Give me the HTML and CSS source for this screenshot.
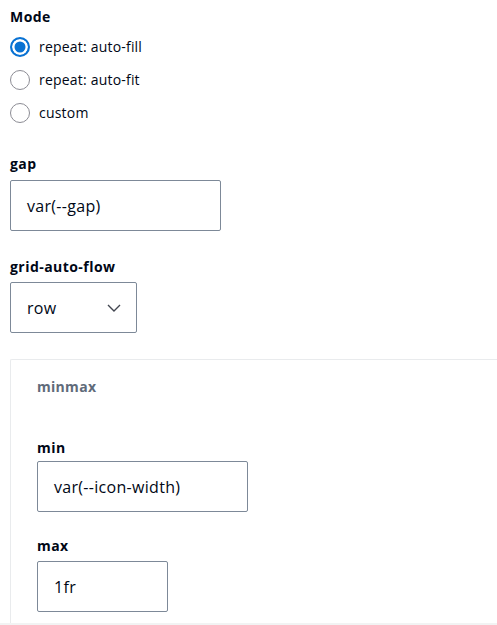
FILE: index.html
```html
<!DOCTYPE html>
<html>
<head>
<meta charset="utf-8">
<link rel="stylesheet" href="styles.css">
</head>
<body>
<div class="page">
  <div class="field mode">
    <div class="label">Mode</div>
    <div class="radios">
      <div class="radio checked"><span class="dot"></span><span>repeat: auto-fill</span></div>
      <div class="radio"><span class="dot"></span><span>repeat: auto-fit</span></div>
      <div class="radio"><span class="dot"></span><span>custom</span></div>
    </div>
  </div>
  <div class="field gapfield">
    <div class="label">gap</div>
    <div class="input w210">var(--gap)</div>
  </div>
  <div class="field flowfield">
    <div class="label">grid-auto-flow</div>
    <div class="input select">
      <span>row</span>
      <svg width="14" height="8" viewBox="0 0 14 8"><path d="M1 1 L7 7 L13 1" fill="none" stroke="#424650" stroke-width="1.4"/></svg>
    </div>
  </div>
  <div class="panel">
    <div class="panel-title">minmax</div>
    <div class="field minfield">
      <div class="label">min</div>
      <div class="input w210 tight">var(--icon-width)</div>
    </div>
    <div class="field maxfield">
      <div class="label">max</div>
      <div class="input w130">1fr</div>
    </div>
  </div>
</div>
</body>
</html>
```
FILE: styles.css
```css
html, body {
  margin: 0;
  padding: 0;
  overflow: hidden;
}
body {
  font-family: "Open Sans", "Noto Sans", sans-serif;
  font-size: 14px;
  line-height: 22px;
  color: #000716;
  height: 625px;
  background: #f2f3f3;
}
.page {
  background: #fff;
  height: 623px;
  padding: 6px 0 0 10px;
  box-sizing: border-box;
  display: flex;
  flex-direction: column;
}
.label {
  font-weight: 700;
  color: #000716;
  letter-spacing: 0.45px;
}
.radios {
  display: flex;
  flex-direction: column;
  margin-top: 8px;
  gap: 11px;
}
.radio {
  display: flex;
  align-items: center;
  gap: 9px;
  height: 22px;
  letter-spacing: 0.2px;
}
.dot {
  width: 20px;
  height: 20px;
  box-sizing: border-box;
  border-radius: 50%;
  border: 1.5px solid #8c8c94;
  background: #fff;
  flex: none;
}
.radio.checked .dot {
  border: 2.5px solid #0972d3;
  box-shadow: inset 0 0 0 2.5px #fff;
  background: #0972d3;
}
.gapfield {
  margin-top: 29px;
}
.gapfield .input {
  margin-top: 5px;
}
.input {
  box-sizing: border-box;
  height: 51px;
  border: 1px solid #7d8998;
  border-radius: 2px;
  padding: 0 16px;
  display: flex;
  align-items: center;
  margin-top: 4px;
  color: #000716;
  font-size: 16px;
  letter-spacing: 0.3px;
}
.input.tight {
  margin-top: 2px;
}
.w210 { width: 211px; }
.w130 { width: 131px; }
.select {
  width: 127px;
  justify-content: space-between;
  padding-right: 15px;
}
.flowfield {
  margin-top: 25px;
}
.panel {
  margin-top: 26px;
  border: 1px solid #e9ebed;
  border-right: none;
  border-bottom: none;
  border-radius: 2px 0 0 0;
  flex: 1;
  padding: 16px 0 0 26px;
  margin-right: -10px;
}
.panel-title {
  font-weight: 700;
  color: #5f6b7a;
  letter-spacing: 0.3px;
}
.minfield {
  margin-top: 39px;
}
.maxfield {
  margin-top: 23px;
}
```
